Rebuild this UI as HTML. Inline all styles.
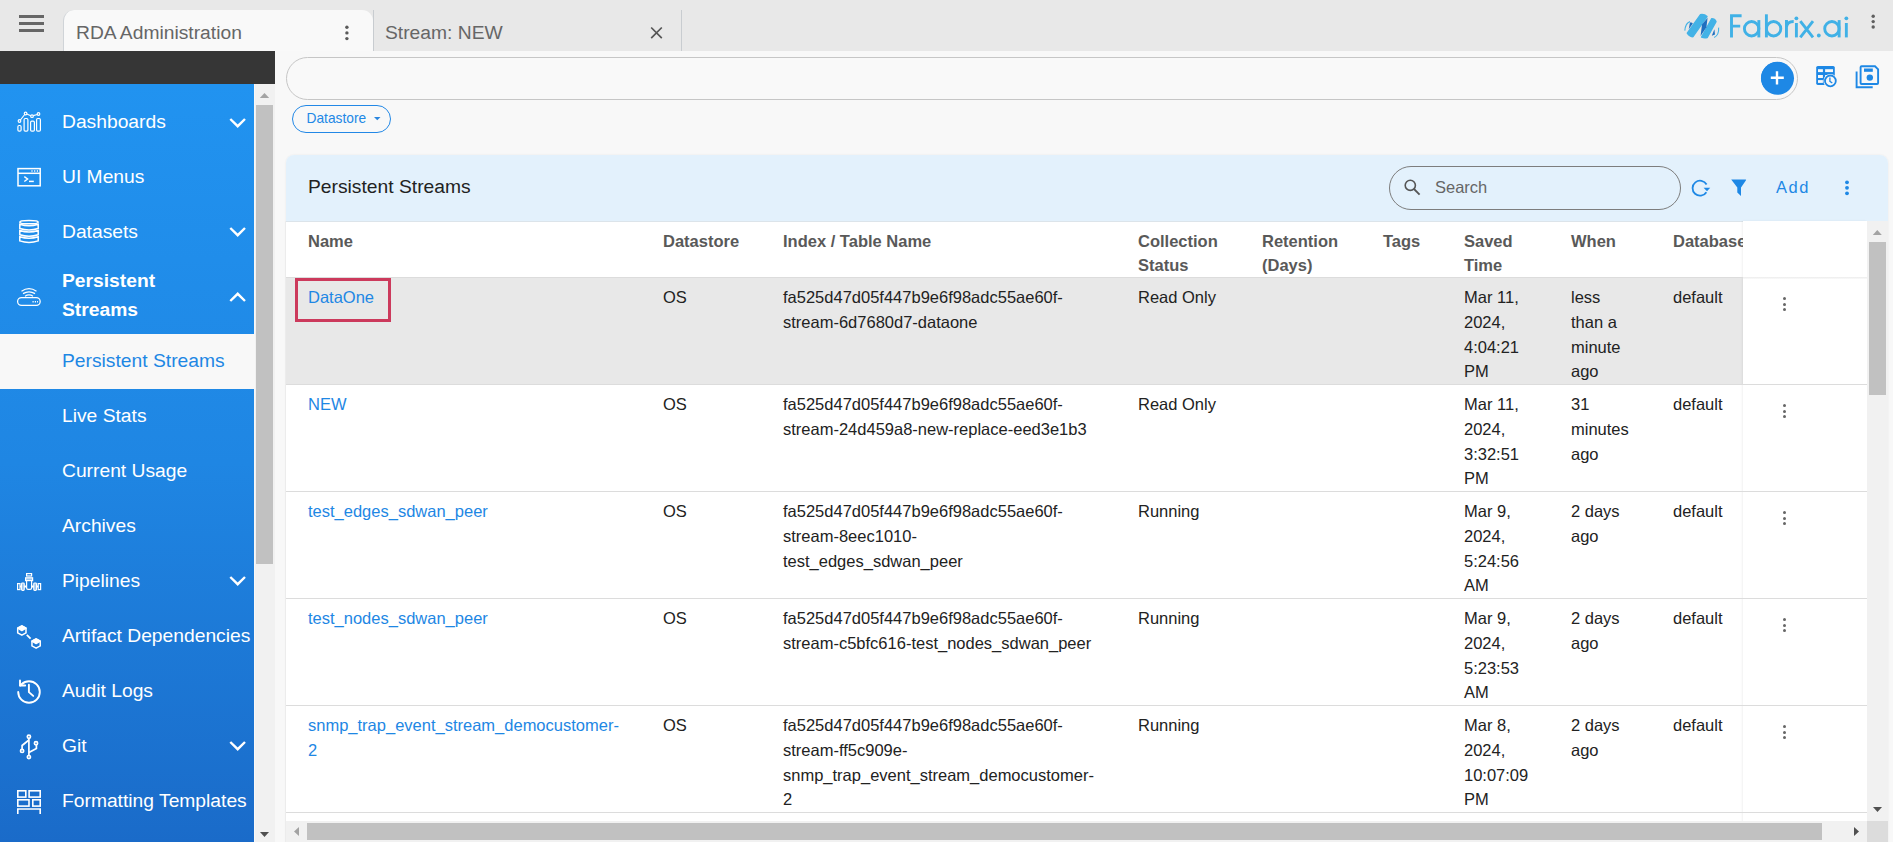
<!DOCTYPE html>
<html><head><meta charset="utf-8">
<style>
*{box-sizing:border-box;margin:0;padding:0}
html,body{width:1893px;height:842px;overflow:hidden;background:#f8f8f8;font-family:"Liberation Sans",sans-serif}
.abs{position:absolute}
#topbar{left:0;top:0;width:1893px;height:51px;background:#e8e8e8}
.ham{left:19px;width:25px;height:2.6px;background:#666}
#tab1{left:63px;top:10px;width:310px;height:41px;background:#f9f9f9;border-radius:11px 11px 0 0;border-left:1px solid #d0d4d8}
#tab1 .t{position:absolute;left:12px;top:11.5px;font-size:19.25px;color:#666;white-space:nowrap}
#tab2 .t{position:absolute;left:11px;top:11.5px;font-size:19.25px;color:#666;white-space:nowrap}
#tab2{left:373px;top:10px;width:309px;height:41px;border-left:1px solid #c8ccd0;border-right:1px solid #c8ccd0}
#darkbar{left:0;top:51px;width:275px;height:33px;background:#363636}
#sidebar{left:0;top:84px;width:254px;height:758px;background:linear-gradient(180deg,#2193f0 0%,#1f86e3 50%,#1a6bc9 100%)}
#sbscroll{left:255px;top:84px;width:20px;height:758px;background:#f1f1f1}
.mi{position:absolute;left:0;width:254px;color:#fff;font-size:19.25px;line-height:22px;white-space:nowrap}
.mi .lbl{position:absolute;left:62px;top:0.7px}
#qbar{left:286px;top:57px;width:1512px;height:43px;border:1px solid #c6c6c6;border-radius:22px;background:#f9f9f9}
#plus{left:1761px;top:62px;width:32px;height:32px;border-radius:50%;background:#1e88e5}
#chip{left:292px;top:105px;width:99px;height:28px;border:1.5px solid #2288e6;border-radius:14px;color:#2288e6;font-size:13.75px}
#card{left:286px;top:155px;width:1602px;height:700px;background:#fff;border-radius:8px 8px 0 0;overflow:hidden;box-shadow:0 0 2px rgba(0,0,0,0.08)}
#cardhead{left:0;top:0;width:1602px;height:67px;background:#e3f1fc;border-bottom:1px solid #dce4ea}
.rb{left:0;width:1582px;height:1px;background:#dcdcdc}
.td{font-size:16.5px;line-height:24.75px;color:#222;white-space:nowrap}
.td.lk{color:#1e87e4}
.th{font-size:16.5px;line-height:24px;color:#595959;font-weight:bold;white-space:nowrap}
.keb{width:3.2px}
.keb i{display:block;width:3.2px;height:3.2px;border-radius:50%;background:#666;margin-bottom:2.4px}
</style></head>
<body>
<div id="topbar" class="abs"></div>
<div class="abs ham" style="top:15.3px"></div>
<div class="abs ham" style="top:22.3px"></div>
<div class="abs ham" style="top:29.3px"></div>
<div id="tab1" class="abs"><span class="t">RDA Administration</span></div>
<div id="tab2" class="abs"><span class="t">Stream: NEW</span></div>
<div id="darkbar" class="abs"></div>
<div id="sidebar" class="abs"></div>
<div id="sbscroll" class="abs"></div>
<div class="abs" style="left:256px;top:105px;width:17px;height:459px;background:#c1c1c1"></div>
<svg class="abs" style="left:254px;top:84px" width="21" height="758"><path d="M5.8 14 L10.5 9 L15.2 14Z" fill="#a3a3a3"/><path d="M6 748 L10.5 753 L15 748Z" fill="#505050"/></svg>
<svg class="abs" style="left:0;top:84px" width="254" height="758" fill="none" stroke="#fff">
 <!-- dashboards -->
 <g stroke-width="1.2">
  <rect x="17.9" y="41.5" width="3.2" height="5.6" rx="1.2"/>
  <rect x="24.1" y="34.5" width="3.8" height="12.6" rx="1.2"/>
  <rect x="30.6" y="37.2" width="3.8" height="9.9" rx="1.2"/>
  <rect x="36.6" y="34.5" width="3.8" height="12.6" rx="1.2"/>
  <circle cx="19.5" cy="37" r="1.3"/><circle cx="25.6" cy="29.5" r="1.3"/><circle cx="32" cy="32.2" r="1.3"/><circle cx="38.5" cy="30" r="1.3"/>
  <path d="M20.4 36 L24.7 30.5 M26.8 30 L30.8 31.7 M33.2 31.6 L37.3 30.5"/>
 </g>
 <!-- ui menus -->
 <g stroke-width="1.5">
  <rect x="18" y="84.6" width="22.2" height="17.2"/>
  <path d="M18 89.3 H40.2"/>
  <path d="M24.3 92.6 L27.6 95 L24.3 97.5" stroke-width="1.4"/>
  <path d="M29 97.4 H33.8"/>
  <path d="M31.4 87 H32.6 M34.1 87 H35.3 M36.8 87 H38" stroke-width="1.6"/>
 </g>
 <!-- datasets -->
 <g stroke-width="1.5">
  <ellipse cx="29" cy="138.2" rx="9.2" ry="1.6"/>
  <path d="M19.8 140.3 V144.5 Q29 147.5 38.2 144.5 V140.3 Q29 143.3 19.8 140.3Z"/>
  <path d="M19.8 146.5 V150.7 Q29 153.7 38.2 150.7 V146.5 Q29 149.5 19.8 146.5Z"/>
  <path d="M19.8 152.7 V156.9 Q29 159.9 38.2 156.9 V152.7 Q29 155.7 19.8 152.7Z"/>
 </g>
 <!-- router -->
 <g stroke-width="1.25">
  <rect x="17.6" y="213.5" width="22.6" height="7.9" rx="3.95"/>
  <path d="M32.5 217.7 H38" stroke-width="1.5" stroke-dasharray="1.2 1.1"/>
  <path d="M21.5 207.2 Q29 202.2 36.5 207.2"/>
  <path d="M23 209.6 Q29 206.1 35 209.6"/>
  <path d="M25 212.2 Q29 209.6 33 212.2"/>
 </g>
 <!-- pipelines -->
 <g stroke-width="1.2">
  <rect x="26.6" y="489.6" width="5" height="2.4"/>
  <rect x="25.6" y="493.8" width="7" height="2.8" fill="rgba(255,255,255,0.55)"/>
  <path d="M26.6 496.6 L26.6 504 Q26.6 505.4 28 505.4 H30.2 Q31.6 505.4 31.6 504 V496.6"/>
  <rect x="17.6" y="499.6" width="2.4" height="6"/>
  <rect x="21.6" y="499" width="2.6" height="7.4" rx="0.8" fill="rgba(255,255,255,0.45)"/>
  <rect x="33.8" y="499" width="2.6" height="7.4" rx="0.8" fill="rgba(255,255,255,0.45)"/>
  <rect x="38.2" y="499.6" width="2.4" height="6"/>
  <path d="M20 502.6 H21.6 M24.2 502.6 H26.6 M31.6 502.6 H33.8 M36.4 502.6 H38.2" stroke-width="2"/>
 </g>
 <!-- artifact deps -->
 <g stroke-width="1.5" stroke-linejoin="round">
  <path d="M21.85 541.9 L26 544.2 V548.9 L21.85 551.2 L17.7 548.9 V544.2Z"/>
  <path d="M21.85 541.9 L26 544.2 L21.85 546.6 L17.7 544.2Z" fill="#fff"/>
  <path d="M36.1 554.9 L40.25 557.2 V561.9 L36.1 564.2 L31.95 561.9 V557.2Z"/>
  <path d="M36.1 554.9 L40.25 557.2 L36.1 559.6 L31.95 557.2Z" fill="#fff"/>
  <path d="M26.8 550.8 L30.6 554.6" stroke-width="1.8"/>
 </g>
 <!-- audit -->
 <g stroke-width="1.9" stroke-linecap="round" stroke-linejoin="round">
  <path d="M18.2 608 A10.8 10.8 0 1 0 29 597.2 A10.8 10.8 0 0 0 21.6 600.2 L20.2 601.5"/>
  <path d="M20 596.4 V601.5 H25.2"/>
  <path d="M28.9 600.8 V608.1 L33.2 611.9"/>
 </g>
 <!-- git -->
 <g stroke-width="1.7">
  <circle cx="28.9" cy="652.7" r="1.6"/><circle cx="28.9" cy="673.1" r="1.6"/>
  <circle cx="22.1" cy="666.9" r="1.6"/><circle cx="36" cy="659.2" r="1.6"/>
  <path d="M28.9 654.3 V671.5"/>
  <path d="M28.9 656 L22.1 661.5 V665.3"/>
  <path d="M28.9 668.5 L36.4 664.4 V660.8"/>
 </g>
 <!-- templates -->
 <g stroke-width="1.6">
  <rect x="17.8" y="706.8" width="8" height="6.3"/>
  <rect x="29.1" y="706.8" width="11.1" height="6.3"/>
  <rect x="17.8" y="715.8" width="11.2" height="6.3"/>
  <rect x="32.8" y="715.8" width="7.4" height="6.3"/>
  <path d="M17.8 730 V725 H40.2 V730"/>
 </g>
 <!-- chevrons -->
 <g stroke-width="2.4">
  <path d="M230.3 35 L237.7 42.2 L245 35"/>
  <path d="M230.3 144 L237.7 151.2 L245 144"/>
  <path d="M230.3 217 L237.7 209.8 L245 217"/>
  <path d="M230.3 493 L237.7 500.2 L245 493"/>
  <path d="M230.3 658 L237.7 665.2 L245 658"/>
 </g>
</svg>
<div class="abs" style="left:0;top:334px;width:254px;height:55px;background:#f8f8f8"></div>
<div class="mi" style="top:110px"><span class="lbl">Dashboards</span></div>
<div class="mi" style="top:165px"><span class="lbl">UI Menus</span></div>
<div class="mi" style="top:220px"><span class="lbl">Datasets</span></div>
<div class="mi" style="top:265.6px;font-weight:bold;line-height:29px"><span class="lbl">Persistent<br>Streams</span></div>
<div class="mi" style="top:349.5px;color:#1e87e4"><span class="lbl">Persistent Streams</span></div>
<div class="mi" style="top:404px"><span class="lbl">Live Stats</span></div>
<div class="mi" style="top:459px"><span class="lbl">Current Usage</span></div>
<div class="mi" style="top:514px"><span class="lbl">Archives</span></div>
<div class="mi" style="top:569px"><span class="lbl">Pipelines</span></div>
<div class="mi" style="top:624px"><span class="lbl">Artifact Dependencies</span></div>
<div class="mi" style="top:679px"><span class="lbl">Audit Logs</span></div>
<div class="mi" style="top:734px"><span class="lbl">Git</span></div>
<div class="mi" style="top:789px"><span class="lbl">Formatting Templates</span></div>

<div id="qbar" class="abs"></div>
<div id="plus" class="abs"></div>
<div id="chip" class="abs"></div>
<div id="card" class="abs">
<div id="cardhead" class="abs"></div>
<div class="abs" style="left:22px;top:20px;font-size:19.25px;color:#222;line-height:24px">Persistent Streams</div>
<div class="abs" style="left:0;top:122px;width:1456.5px;height:107px;background:#e8e8e8"></div>
<div class="abs" style="left:1456.5px;top:66px;width:124.5px;height:620px;background:#fff;box-shadow:-1px 0 2px rgba(0,0,0,0.06)"></div>
<div class="abs rb" style="top:121.5px"></div>
<div class="abs rb" style="top:229px"></div>
<div class="abs rb" style="top:336px"></div>
<div class="abs rb" style="top:443px"></div>
<div class="abs rb" style="top:550px"></div>
<div class="abs rb" style="top:657px"></div>
<div class="abs th" style="left:22px;top:74px">Name</div>
<div class="abs th" style="left:377px;top:74px">Datastore</div>
<div class="abs th" style="left:497px;top:74px">Index / Table Name</div>
<div class="abs th" style="left:852px;top:74px">Collection<br>Status</div>
<div class="abs th" style="left:976px;top:74px">Retention<br>(Days)</div>
<div class="abs th" style="left:1097px;top:74px">Tags</div>
<div class="abs th" style="left:1178px;top:74px">Saved<br>Time</div>
<div class="abs th" style="left:1285px;top:74px">When</div>
<div class="abs th" style="left:1387px;top:74px">Database</div>
<div class="abs td lk" style="left:22px;top:130px">DataOne</div>
<div class="abs td" style="left:377px;top:130px">OS</div>
<div class="abs td" style="left:497px;top:130px">fa525d47d05f447b9e6f98adc55ae60f-<br>stream-6d7680d7-dataone</div>
<div class="abs td" style="left:852px;top:130px">Read Only</div>
<div class="abs td" style="left:1178px;top:130px">Mar 11,<br>2024,<br>4:04:21<br>PM</div>
<div class="abs td" style="left:1285px;top:130px">less<br>than a<br>minute<br>ago</div>
<div class="abs td" style="left:1387px;top:130px">default</div>
<div class="abs td lk" style="left:22px;top:237px">NEW</div>
<div class="abs td" style="left:377px;top:237px">OS</div>
<div class="abs td" style="left:497px;top:237px">fa525d47d05f447b9e6f98adc55ae60f-<br>stream-24d459a8-new-replace-eed3e1b3</div>
<div class="abs td" style="left:852px;top:237px">Read Only</div>
<div class="abs td" style="left:1178px;top:237px">Mar 11,<br>2024,<br>3:32:51<br>PM</div>
<div class="abs td" style="left:1285px;top:237px">31<br>minutes<br>ago</div>
<div class="abs td" style="left:1387px;top:237px">default</div>
<div class="abs td lk" style="left:22px;top:344px">test_edges_sdwan_peer</div>
<div class="abs td" style="left:377px;top:344px">OS</div>
<div class="abs td" style="left:497px;top:344px">fa525d47d05f447b9e6f98adc55ae60f-<br>stream-8eec1010-<br>test_edges_sdwan_peer</div>
<div class="abs td" style="left:852px;top:344px">Running</div>
<div class="abs td" style="left:1178px;top:344px">Mar 9,<br>2024,<br>5:24:56<br>AM</div>
<div class="abs td" style="left:1285px;top:344px">2 days<br>ago</div>
<div class="abs td" style="left:1387px;top:344px">default</div>
<div class="abs td lk" style="left:22px;top:451px">test_nodes_sdwan_peer</div>
<div class="abs td" style="left:377px;top:451px">OS</div>
<div class="abs td" style="left:497px;top:451px">fa525d47d05f447b9e6f98adc55ae60f-<br>stream-c5bfc616-test_nodes_sdwan_peer</div>
<div class="abs td" style="left:852px;top:451px">Running</div>
<div class="abs td" style="left:1178px;top:451px">Mar 9,<br>2024,<br>5:23:53<br>AM</div>
<div class="abs td" style="left:1285px;top:451px">2 days<br>ago</div>
<div class="abs td" style="left:1387px;top:451px">default</div>
<div class="abs td lk" style="left:22px;top:558px">snmp_trap_event_stream_democustomer-<br>2</div>
<div class="abs td" style="left:377px;top:558px">OS</div>
<div class="abs td" style="left:497px;top:558px">fa525d47d05f447b9e6f98adc55ae60f-<br>stream-ff5c909e-<br>snmp_trap_event_stream_democustomer-<br>2</div>
<div class="abs td" style="left:852px;top:558px">Running</div>
<div class="abs td" style="left:1178px;top:558px">Mar 8,<br>2024,<br>10:07:09<br>PM</div>
<div class="abs td" style="left:1285px;top:558px">2 days<br>ago</div>
<div class="abs td" style="left:1387px;top:558px">default</div>
<div class="abs" style="left:1456.5px;top:66px;width:124.5px;height:56px;background:#fff"></div>
<div class="abs" style="left:1456.5px;top:122px;width:124.5px;height:2px;background:linear-gradient(#ececec,#fafafa)"></div>
<div class="abs keb" style="left:1497.3000000000002px;top:142.10000000000002px"><i></i><i></i><i></i></div>
<div class="abs keb" style="left:1497.3000000000002px;top:249.10000000000002px"><i></i><i></i><i></i></div>
<div class="abs keb" style="left:1497.3000000000002px;top:356.1px"><i></i><i></i><i></i></div>
<div class="abs keb" style="left:1497.3000000000002px;top:463.1px"><i></i><i></i><i></i></div>
<div class="abs keb" style="left:1497.3000000000002px;top:570.1px"><i></i><i></i><i></i></div>
</div>
<svg class="abs" style="left:0;top:0" width="1893" height="51">
 <g fill="#5a5a5a"><circle cx="346.9" cy="27.2" r="1.7"/><circle cx="346.9" cy="32.9" r="1.7"/><circle cx="346.9" cy="38.6" r="1.7"/></g>
 <path d="M651.2 27.5 L661.8 38.1 M661.8 27.5 L651.2 38.1" stroke="#555" stroke-width="1.7"/>
 <g fill="#5f5f5f"><circle cx="1873.2" cy="16.2" r="1.7"/><circle cx="1873.2" cy="21.6" r="1.7"/><circle cx="1873.2" cy="27" r="1.7"/></g>
 <g fill="#43b2e6" stroke="#43b2e6" stroke-width="1.4" stroke-linejoin="round">
  <path d="M1687.3 33.2 L1700.5 14.6 Q1704.5 14 1707 16.6 L1693 36.6 Q1690 37.2 1687.3 33.2Z"/>
  <path d="M1701.6 37.2 L1711.6 18.8 Q1714.6 18.6 1716 21.6 L1707.3 37.5 Q1704 38 1701.6 37.2Z"/>
 </g>
 <g fill="#1f6fc0">
  <path d="M1700.6 36 L1702 24.4 L1707.6 17.8 L1706.4 27.2Z"/>
  <path d="M1688.7 29.2 L1690 22.6 Q1692 22 1692.8 23.6Z"/>
  <path d="M1711.8 35.8 L1714.4 29.2 L1715 34.4Z"/>
 </g>
 <g fill="none" stroke="#43b2e6" stroke-width="1.1">
  <path d="M1684.8 30.6 Q1685.5 23 1690 21.6"/>
  <path d="M1718.6 27.6 Q1719.2 35 1714.2 37.4"/>
 </g>
 <g fill="none" stroke="#40b1e6" stroke-width="2.9">
  <path d="M1731.5 37.4 V15.75 H1741.6 M1731.5 26.15 H1740.2"/>
  <circle cx="1751.6" cy="28.75" r="7.2"/><path d="M1758.85 20.1 V37.4"/>
  <path d="M1766.4 14.3 V37.4"/><circle cx="1773.6" cy="28.75" r="7.2"/>
  <path d="M1786.45 20.1 V37.4 M1786.45 27.2 Q1787 21.55 1793.7 21.55"/>
  <path d="M1796.4 23 V37.4"/>
  <path d="M1800.3 21.2 L1813 37.4 M1813 21.2 L1800.3 37.4"/>
  <circle cx="1831.9" cy="28.75" r="7.2"/><path d="M1839.15 20.1 V37.4"/>
  <path d="M1846.35 23 V37.4"/>
 </g>
 <g fill="#40b1e6"><circle cx="1796.4" cy="18.3" r="1.9"/><circle cx="1846.35" cy="18.3" r="1.9"/><circle cx="1818.8" cy="35.5" r="1.9"/></g>
</svg>

<svg class="abs" style="left:1750px;top:55px" width="143" height="45">
 <circle cx="27.5" cy="23.3" r="16.5" fill="#1e88e5"/>
 <path d="M20.8 22.8 H33.8 M27 16.2 V29.5" stroke="#fff" stroke-width="2.4"/>
 <rect x="66.2" y="10.9" width="18.6" height="19" rx="1.6" fill="#1e88e5"/>
 <g fill="#f8f8f8">
  <rect x="68" y="14.2" width="4.9" height="2.9"/><rect x="75.1" y="14.2" width="7.9" height="2.9"/>
  <rect x="68" y="20" width="4.9" height="3"/><rect x="75.1" y="20" width="7.9" height="3"/>
  <rect x="68" y="25.1" width="4.9" height="2.8"/>
 </g>
 <circle cx="80.4" cy="25.9" r="7" fill="#f8f8f8"/>
 <circle cx="80.4" cy="25.9" r="5.4" fill="none" stroke="#1e88e5" stroke-width="1.8"/>
 <path d="M79.9 22.6 V26.3 L82.3 28.1" fill="none" stroke="#1e88e5" stroke-width="1.3"/>
 <g fill="none" stroke="#1e88e5" stroke-width="1.9">
  <path d="M111.6 11.3 H125 L128.1 14.4 V28 Q128.1 29 127.1 29 H111.6 Q110.6 29 110.6 28 V12.3 Q110.6 11.3 111.6 11.3Z"/>
  <path d="M106.6 16.4 V32.2 H122.7"/>
 </g>
 <rect x="114" y="13.5" width="8.8" height="3.3" fill="#1e88e5"/>
 <circle cx="119.8" cy="22.6" r="3.2" fill="#1e88e5"/>
</svg>
<div id="chipt" class="abs" style="left:306.5px;top:111.3px;font-size:13.75px;line-height:16px;color:#2288e6">Datastore</div>
<svg class="abs" style="left:370px;top:110px" width="15" height="15"><path d="M4 7 L10.5 7 L7.25 10.2Z" fill="#2a86de"/></svg>

<div class="abs" style="left:1389px;top:166px;width:291.5px;height:44px;border:1px solid #7d7d7d;border-radius:22px"></div>
<svg class="abs" style="left:1385px;top:170px" width="480" height="40" fill="none">
 <circle cx="25.3" cy="15.3" r="5.1" stroke="#555" stroke-width="1.6"/>
 <path d="M29 19 L34.6 24.6" stroke="#555" stroke-width="1.8"/>
 <path d="M321.4 22.2 A7.5 7.5 0 1 1 321.6 14.5" stroke="#1e88e5" stroke-width="1.8"/>
 <path d="M318.6 17.8 L325.2 17.8 L322 21.2Z" fill="#1e88e5"/>
 <path d="M346.2 9.6 Q346 9.4 347 9.4 H360.6 Q361.4 9.4 361 10.2 L356 17.5 V26 L352.3 22.5 V17.5Z" fill="#1e88e5"/>
 <g fill="#1e88e5"><circle cx="462" cy="12.3" r="1.9"/><circle cx="462" cy="17.8" r="1.9"/><circle cx="462" cy="23.3" r="1.9"/></g>
</svg>
<div class="abs" style="left:1435px;top:175.5px;font-size:16.5px;line-height:22px;color:#666">Search</div>
<div class="abs" style="left:1776px;top:175.5px;font-size:16.5px;line-height:22px;color:#1e88e5;letter-spacing:1.5px">Add</div>

<div class="abs" style="left:285px;top:221px;width:1px;height:621px;background:#ececec"></div>
<div class="abs" style="left:1867px;top:221px;width:21px;height:600px;background:#f1f1f1"></div>
<div class="abs" style="left:1869px;top:242px;width:17px;height:153px;background:#c1c1c1"></div>
<svg class="abs" style="left:1867px;top:221px" width="21" height="600"><path d="M5.8 14 L10.3 9 L14.8 14Z" fill="#a3a3a3"/><path d="M6 586 L10.5 591 L15 586Z" fill="#505050"/></svg>
<div class="abs" style="left:286px;top:821px;width:1581px;height:21px;background:#f1f1f1"></div>
<div class="abs" style="left:307px;top:823px;width:1515px;height:17px;background:#c1c1c1"></div>
<div class="abs" style="left:1867px;top:821px;width:21px;height:21px;background:#dcdcdc"></div>
<svg class="abs" style="left:286px;top:821px" width="1581" height="21"><path d="M13 6 L8 10.5 L13 15Z" fill="#a3a3a3"/><path d="M1568 6 L1573 10.5 L1568 15Z" fill="#505050"/></svg>
<div class="abs" style="left:295px;top:278px;width:96px;height:44px;border:3px solid #cc3a5c"></div>

</body></html>
